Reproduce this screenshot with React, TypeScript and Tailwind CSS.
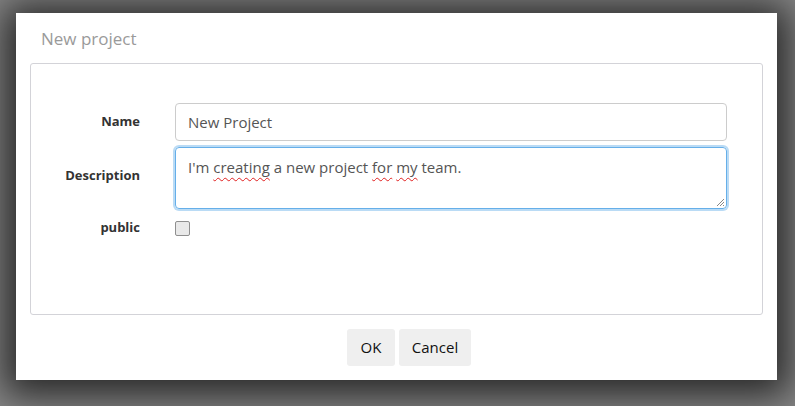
import React from 'react';

const font = { fontFamily: '"Open Sans", "Noto Sans", sans-serif' };

const Squiggle: React.FC<{ children: React.ReactNode }> = ({ children }) => (
  <span className="underline decoration-wavy decoration-[#e02020] decoration-1 underline-offset-[4px]">{children}</span>
);

const App: React.FC = () => {
  return (
    <div
      className="w-[795px] h-[406px] bg-[#888888] pt-[13px] pl-[16px] overflow-hidden"
      style={font}
    >
      <div className="w-[761px] h-[367px] bg-white flex flex-col shadow-[0_4px_36px_12px_rgba(0,0,0,0.72)]">
        {/* Header */}
        <div className="h-[50px] flex items-center px-[25px] pt-[2px]">
          <h1 className="text-[17px] text-[#9a9a9a] font-normal">New project</h1>
        </div>

        {/* Form panel */}
        <div className="mx-[14px] h-[252px] border border-[#d3d3d8] rounded-[3px] pt-[39px] pr-[35px]">
          <div className="grid grid-cols-[109px_1fr] gap-x-[35px]">
            {/* Name */}
            <label className="h-[38px] flex items-center justify-end text-[13px] font-bold text-[#333]">
              Name
            </label>
            <div className="h-[38px] border border-[#ccc] rounded-[4px] flex items-center px-[12px] text-[15px] text-[#555]">
              New Project
            </div>

            {/* Description */}
            <label className="mt-[6px] h-[58px] flex items-center justify-end text-[13px] font-bold text-[#333]">
              Description
            </label>
            <div className="mt-[6px] h-[62px] relative border border-[#66afe9] rounded-[4px] shadow-[0_0_0_2px_rgba(102,175,233,0.45)] px-[12px] pt-[8px] text-[15px] text-[#555] leading-[22px]">
              I'm <Squiggle>creating</Squiggle> a new project <Squiggle>for</Squiggle> <Squiggle>my</Squiggle> team.
              <svg className="absolute right-[1px] bottom-[1px]" width="10" height="10" viewBox="0 0 10 10">
                <line x1="9" y1="2" x2="2" y2="9" stroke="#888" strokeWidth="1" />
                <line x1="9" y1="5" x2="5" y2="9" stroke="#888" strokeWidth="1" />
                <line x1="9" y1="8" x2="8" y2="9" stroke="#888" strokeWidth="1" />
              </svg>
            </div>

            {/* Public */}
            <label className="mt-[11px] h-[16px] flex items-center justify-end text-[13px] font-bold text-[#333]">
              public
            </label>
            <div className="mt-[11px] h-[16px] flex items-center">
              <span className="w-[15px] h-[15px] border border-[#8f8f8f] rounded-[2px] bg-[#e9e9e9]" />
            </div>
          </div>
        </div>

        {/* Buttons */}
        <div className="flex justify-center gap-[4px] pt-[14px] pl-[25px]">
          <button className="h-[37px] w-[48px] bg-[#efefef] rounded-[3px] text-[15px] text-[#111]">OK</button>
          <button className="h-[37px] w-[72px] bg-[#efefef] rounded-[3px] text-[15px] text-[#111]">Cancel</button>
        </div>
      </div>
    </div>
  );
};

export default App;
